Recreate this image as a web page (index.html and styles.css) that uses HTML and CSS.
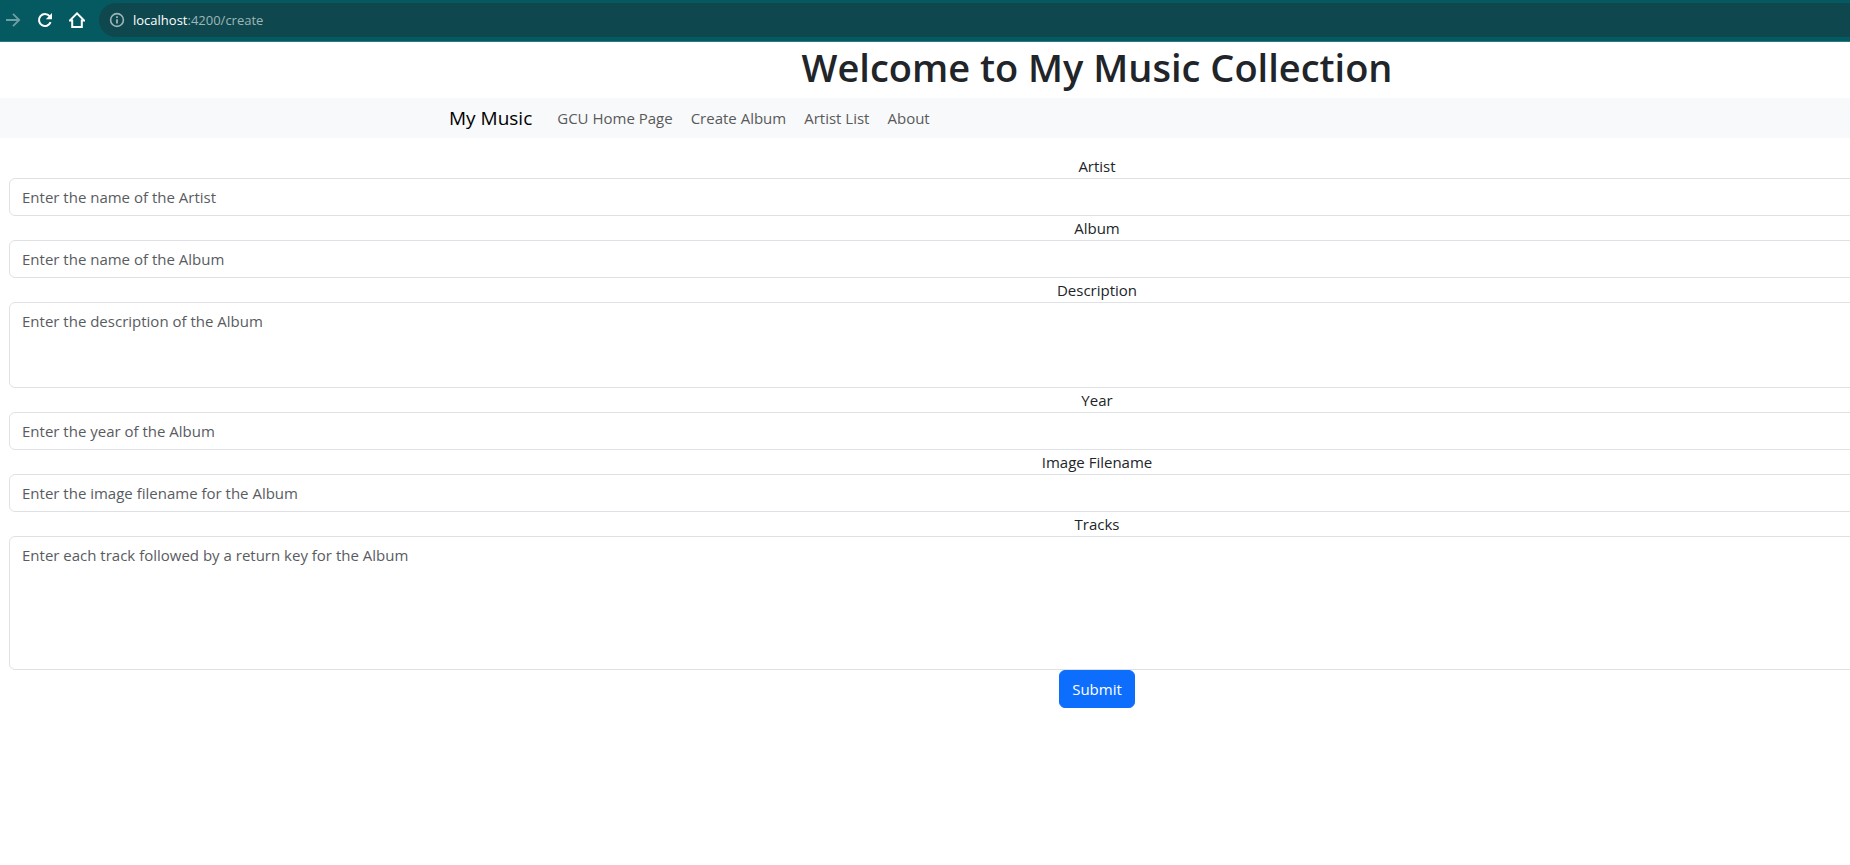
FILE: index.html
```html
<!DOCTYPE html>
<html lang="en">
<head>
<meta charset="utf-8">
<title>My Music</title>
<link rel="stylesheet" href="styles.css">
</head>
<body>
<div class="toolbar">
  <button class="tool dim" type="button" aria-label="Forward">
    <svg width="16" height="16" viewBox="0 0 16 16" fill="none" stroke="currentColor" stroke-width="1.8"><path d="M1 8h13M8 1.8 14.2 8 8 14.2"/></svg>
  </button>
  <button class="tool" type="button" aria-label="Reload">
    <svg width="16" height="16" viewBox="0 0 16 16" fill="none" stroke="currentColor" stroke-width="2"><path d="M13.6 10.2A6 6 0 1 1 12.6 4.2L14 5.6"/><path d="M15 1v6.2H8.8z" fill="currentColor" stroke="none"/></svg>
  </button>
  <button class="tool" type="button" aria-label="Home">
    <svg width="16" height="16" viewBox="0 0 16 16" fill="none" stroke="currentColor" stroke-width="2"><path d="M.8 8.6H3.2V15h9.6V8.6H15.2L8 1.4z"/></svg>
  </button>
  <div class="address">
    <svg width="16" height="16" viewBox="0 0 16 16" fill="none" stroke="currentColor" stroke-width="1.6"><circle cx="8" cy="8" r="6.4"/><path d="M8 7.2v4.3M8 4.3v1.7" stroke-width="1.8"/></svg>
    <span class="url"><span class="host">localhost</span>:4200/create</span>
  </div>
</div>
<div class="page">
  <h1 class="title">Welcome to My Music Collection</h1>
  <nav class="navbar">
    <div class="container">
      <a class="brand" href="#">My Music</a>
      <a class="link" href="#">GCU Home Page</a>
      <a class="link" href="#">Create Album</a>
      <a class="link" href="#">Artist List</a>
      <a class="link" href="#">About</a>
    </div>
  </nav>
  <form class="form">
    <label for="artist">Artist</label>
    <input class="control" id="artist" type="text" placeholder="Enter the name of the Artist">
    <label for="album">Album</label>
    <input class="control" id="album" type="text" placeholder="Enter the name of the Album">
    <label for="description">Description</label>
    <textarea class="control" id="description" rows="3" placeholder="Enter the description of the Album"></textarea>
    <label for="year">Year</label>
    <input class="control" id="year" type="text" placeholder="Enter the year of the Album">
    <label for="image">Image Filename</label>
    <input class="control" id="image" type="text" placeholder="Enter the image filename for the Album">
    <label for="tracks">Tracks</label>
    <textarea class="control" id="tracks" rows="5" placeholder="Enter each track followed by a return key for the Album"></textarea>
    <button class="submit" type="submit">Submit</button>
  </form>
</div>
</body>
</html>
```
FILE: styles.css
```css
* {
  box-sizing: border-box;
}

body {
  margin: 0;
  overflow-x: hidden;
  background: #fff;
  color: #212529;
  font: 15px/24px "Segoe UI", "Open Sans", "Noto Sans", sans-serif;
}

.toolbar {
  display: flex;
  align-items: center;
  gap: 16px;
  padding: 3px 0 4px 5px;
  background: #045a60;
  border-bottom: 1px solid #26797e;
}

.tool {
  display: flex;
  padding: 0;
  border: 0;
  background: none;
  color: #fff;
}

.dim {
  color: #6f9fa3;
}

.address {
  display: flex;
  flex: 1;
  align-items: center;
  gap: 8px;
  height: 34px;
  margin-left: -2px;
  padding-left: 10px;
  border-radius: 17px 0 0 17px;
  background: #0e484e;
  color: #9fb6b8;
}

.url {
  font-size: 13px;
}

.host {
  color: #fff;
}

/* The page is wider than the window, so its right side runs out of view. */
.page {
  width: calc(100% + 344px);
}

.title {
  margin: 0;
  padding: 1px 0 7px;
  font-size: 38px;
  font-weight: 600;
  line-height: 48px;
  text-align: center;
}

.navbar {
  background: #f8f9fa;
}

.container {
  display: flex;
  align-items: center;
  gap: 18px;
  max-width: 1320px;
  height: 40px;
  margin: 0 auto;
  padding: 0 12px;
}

.brand {
  margin-right: 7px;
  color: #000;
  font-size: 19px;
  text-decoration: none;
}

.link {
  color: #595a5b;
  text-decoration: none;
}

.form {
  display: flex;
  flex-direction: column;
  align-items: center;
  padding: 16px 9px;
}

.control {
  display: block;
  width: 100%;
  margin: 0;
  padding: 6px 12px;
  border: 1px solid #dee2e6;
  border-radius: 6px;
  background: #fff;
  color: #212529;
  font: inherit;
  resize: none;
}

.control::placeholder {
  color: #595c5f;
  opacity: 1;
}

.submit {
  padding: 6px 12px;
  border: 1px solid #0d6efd;
  border-radius: 6px;
  background: #0d6efd;
  color: #fff;
  font: inherit;
}
```
